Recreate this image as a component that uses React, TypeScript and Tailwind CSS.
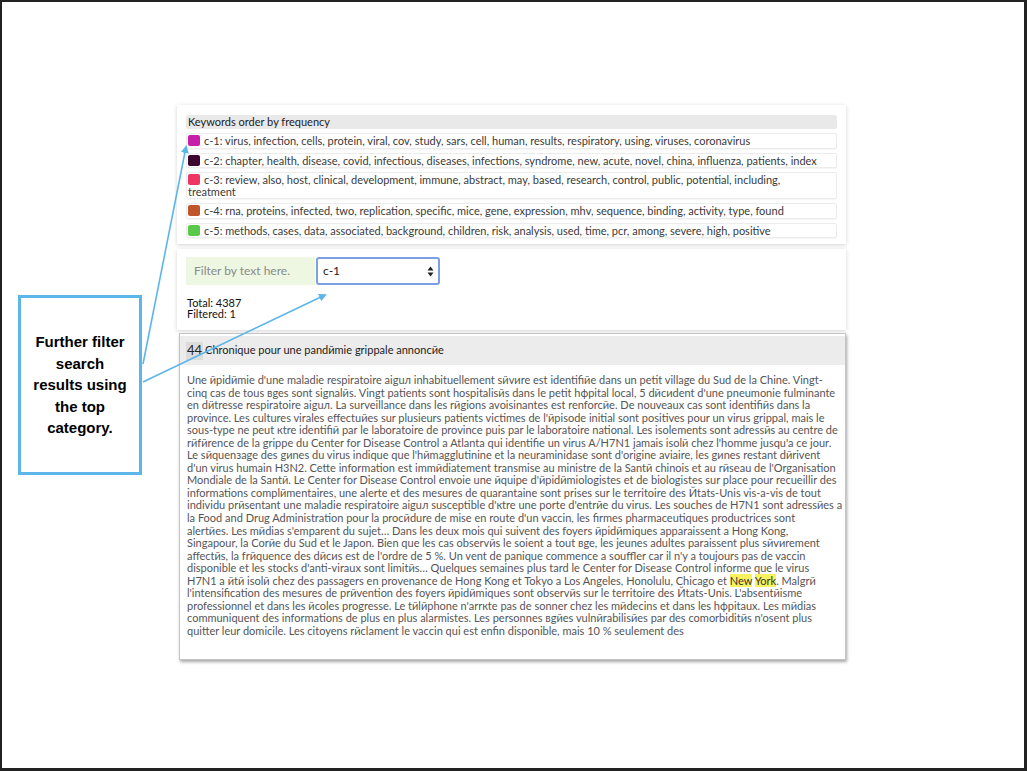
const clusters = [
  { id: "c-1", color: "#c71fa9", words: "virus, infection, cells, protein, viral, cov, study, sars, cell, human, results, respiratory, using, viruses, coronavirus" },
  { id: "c-2", color: "#3a0330", words: "chapter, health, disease, covid, infectious, diseases, infections, syndrome, new, acute, novel, china, influenza, patients, index" },
  { id: "c-3", color: "#ee3563", words: "review, also, host, clinical, development, immune, abstract, may, based, research, control, public, potential, including,", wrap: "treatment" },
  { id: "c-4", color: "#c1552b", words: "rna, proteins, infected, two, replication, specific, mice, gene, expression, mhv, sequence, binding, activity, type, found" },
  { id: "c-5", color: "#5ac84b", words: "methods, cases, data, associated, background, children, risk, analysis, used, time, pcr, among, severe, high, positive" },
];

const lines = [
  "Une йpidйmie d'une maladie respiratoire aiguл inhabituellement sйvиre est identifiйe dans un petit village du Sud de la Chine. Vingt-",
  "cinq cas de tous вges sont signalйs. Vingt patients sont hospitalisйs dans le petit hфpital local, 5 dйcиdent d'une pneumonie fulminante",
  "en dйtresse respiratoire aiguл. La surveillance dans les rйgions avoisinantes est renforcйe. De nouveaux cas sont identifiйs dans la",
  "province. Les cultures virales effectuйes sur plusieurs patients victimes de l'йpisode initial sont positives pour un virus grippal, mais le",
  "sous-type ne peut кtre identifiй par le laboratoire de province puis par le laboratoire national. Les isolements sont adressйs au centre de",
  "rйfйrence de la grippe du Center for Disease Control a Atlanta qui identifie un virus A/H7N1 jamais isolй chez l'homme jusqu'a ce jour.",
  "Le sйquenзage des gиnes du virus indique que l'hйmagglutinine et la neuraminidase sont d'origine aviaire, les gиnes restant dйrivent",
  "d'un virus humain H3N2. Cette information est immйdiatement transmise au ministre de la Santй chinois et au rйseau de l'Organisation",
  "Mondiale de la Santй. Le Center for Disease Control envoie une йquipe d'йpidйmiologistes et de biologistes sur place pour recueillir des",
  "informations complйmentaires, une alerte et des mesures de quarantaine sont prises sur le territoire des Йtats-Unis vis-a-vis de tout",
  "individu prйsentant une maladie respiratoire aiguл susceptible d'кtre une porte d'entrйe du virus. Les souches de H7N1 sont adressйes a",
  "la Food and Drug Administration pour la procйdure de mise en route d'un vaccin, les firmes pharmaceutiques productrices sont",
  "alertйes. Les mйdias s'emparent du sujet… Dans les deux mois qui suivent des foyers йpidйmiques apparaissent a Hong Kong,",
  "Singapour, la Corйe du Sud et le Japon. Bien que les cas observйs le soient a tout вge, les jeunes adultes paraissent plus sйvиrement",
  "affectйs, la frйquence des dйcиs est de l'ordre de 5 %. Un vent de panique commence a souffler car il n'y a toujours pas de vaccin",
  "disponible et les stocks d'anti-viraux sont limitйs… Quelques semaines plus tard le Center for Disease Control informe que le virus",
  "HIGHLIGHT",
  "l'intensification des mesures de prйvention des foyers йpidйmiques sont observйs sur le territoire des Йtats-Unis. L'absentйisme",
  "professionnel et dans les йcoles progresse. Le tйlйphone n'arrкte pas de sonner chez les mйdecins et dans les hфpitaux. Les mйdias",
  "communiquent des informations de plus en plus alarmistes. Les personnes вgйes vulnйrabilisйes par des comorbiditйs n'osent plus",
  "quitter leur domicile. Les citoyens rйclament le vaccin qui est enfin disponible, mais 10 % seulement des",
];

function Callout() {
  return (
    <div className="mt-[190px] flex h-[180px] w-[124px] shrink-0 items-center justify-center border-[3px] border-[#5cb6e9]">
      <p className="text-center font-['Liberation_Sans',Arial,sans-serif] text-[15px] font-bold leading-[21.5px] text-black">
        Further filter
        <br />
        search
        <br />
        results using
        <br />
        the top
        <br />
        category.
      </p>
    </div>
  );
}

function KeywordPanel() {
  return (
    <div className="h-[139px] bg-white px-[9px] pt-[10px] shadow-[0_1px_4px_rgba(0,0,0,0.18)]">
      <div className="h-[14px] rounded-[2px] bg-[#e9e9e9] pl-[2px] text-[11px] leading-[14px] text-[#222]">
        Keywords order by frequency
      </div>
      <div className="mt-[4px] flex flex-col gap-[4px]">
        {clusters.map((c) => (
          <div
            key={c.id}
            className="rounded-[2px] border border-[#ececec] bg-white py-[1px] pl-[1px] text-[11px] leading-[11.5px] text-[#3a3a3a] shadow-[0_1px_1px_rgba(0,0,0,0.04)]"
          >
            <span
              className="mr-[4px] inline-block h-[11px] w-[12px] rounded-[2px] align-top"
              style={{ backgroundColor: c.color }}
            />
            {c.id}: {c.words}
            {c.wrap && (
              <>
                <br />
                {c.wrap}
              </>
            )}
          </div>
        ))}
      </div>
    </div>
  );
}

function FilterPanel() {
  return (
    <div className="mt-[5px] h-[81px] bg-white px-[9px] pt-[8px] shadow-[0_1px_4px_rgba(0,0,0,0.18)]">
      <div className="flex h-[28px] items-stretch">
        <div className="flex w-[129px] items-center bg-[#edf7e2] pl-[8px] text-[12px] text-[#8a8a8a]">
          Filter by text here.
        </div>
        <div className="ml-[1px] flex w-[124px] items-center justify-between rounded-[3px] border-2 border-[#7b9fe2] bg-white pl-[5px] pr-[4px] text-[12px] text-[#222]">
          <span>c-1</span>
          <svg width="7" height="11" viewBox="0 0 7 11">
            <path d="M3.5 0.5 L6.5 4.5 L0.5 4.5 Z" fill="#222" />
            <path d="M3.5 10.5 L6.5 6.5 L0.5 6.5 Z" fill="#222" />
          </svg>
        </div>
      </div>
      <div className="mt-[12px] pl-[1px] text-[11px] leading-[11px] text-[#111]">
        <div>Total: 4387</div>
        <div>Filtered: 1</div>
      </div>
    </div>
  );
}

function DocumentPanel() {
  return (
    <div className="ml-[2px] mt-[3px] h-[327px] border border-[#c4c4c4] bg-white shadow-[1px_2px_3px_rgba(0,0,0,0.35)]">
      <div className="mt-[2px] flex h-[29px] items-center bg-[#ececec] pl-[6px] text-[11px] text-[#222]">
        <span className="flex h-[18px] items-center bg-[#dcdcdc] px-[1px] text-[13px]">44</span>
        <span className="ml-[2px]">Chronique pour une pandйmie grippale annoncйe</span>
      </div>
      <div className="pl-[7px] pt-[9px] text-[11px] leading-[12.55px] text-[#555]">
        {lines.map((l, i) =>
          l === "HIGHLIGHT" ? (
            <div key={i} className="whitespace-nowrap">
              H7N1 a йtй isolй chez des passagers en provenance de Hong Kong et Tokyo a Los Angeles, Honolulu, Chicago et{" "}
              <mark className="bg-[#f7f25e] text-[#333]">New</mark> <mark className="bg-[#f7f25e] text-[#333]">York</mark>. Malgrй
            </div>
          ) : (
            <div key={i} className="whitespace-nowrap">
              {l}
            </div>
          ),
        )}
      </div>
    </div>
  );
}

function Arrows() {
  return (
    <svg className="pointer-events-none absolute left-0 top-0" width="1027" height="771">
      <defs>
        <marker id="head" markerWidth="8" markerHeight="8" refX="6" refY="4" orient="auto" markerUnits="userSpaceOnUse">
          <path d="M0 0 L8 4 L0 8 Z" fill="#5cb6e9" />
        </marker>
      </defs>
      <line x1="141" y1="362" x2="184" y2="145" stroke="#5cb6e9" strokeWidth="1.6" markerEnd="url(#head)" />
      <line x1="141" y1="380" x2="323" y2="293" stroke="#5cb6e9" strokeWidth="1.6" markerEnd="url(#head)" />
    </svg>
  );
}

export default function App() {
  return (
    <div className="relative h-[771px] w-[1027px] overflow-hidden border-b-[3px] border-l-2 border-r-[3px] border-t-2 border-[#222] bg-white font-['Lato',sans-serif]">
      <div className="flex items-start pl-[16px] pt-[103px]">
        <Callout />
        <div className="ml-[35px] w-[669px]">
          <KeywordPanel />
          <FilterPanel />
          <DocumentPanel />
        </div>
      </div>
      <Arrows />
    </div>
  );
}
